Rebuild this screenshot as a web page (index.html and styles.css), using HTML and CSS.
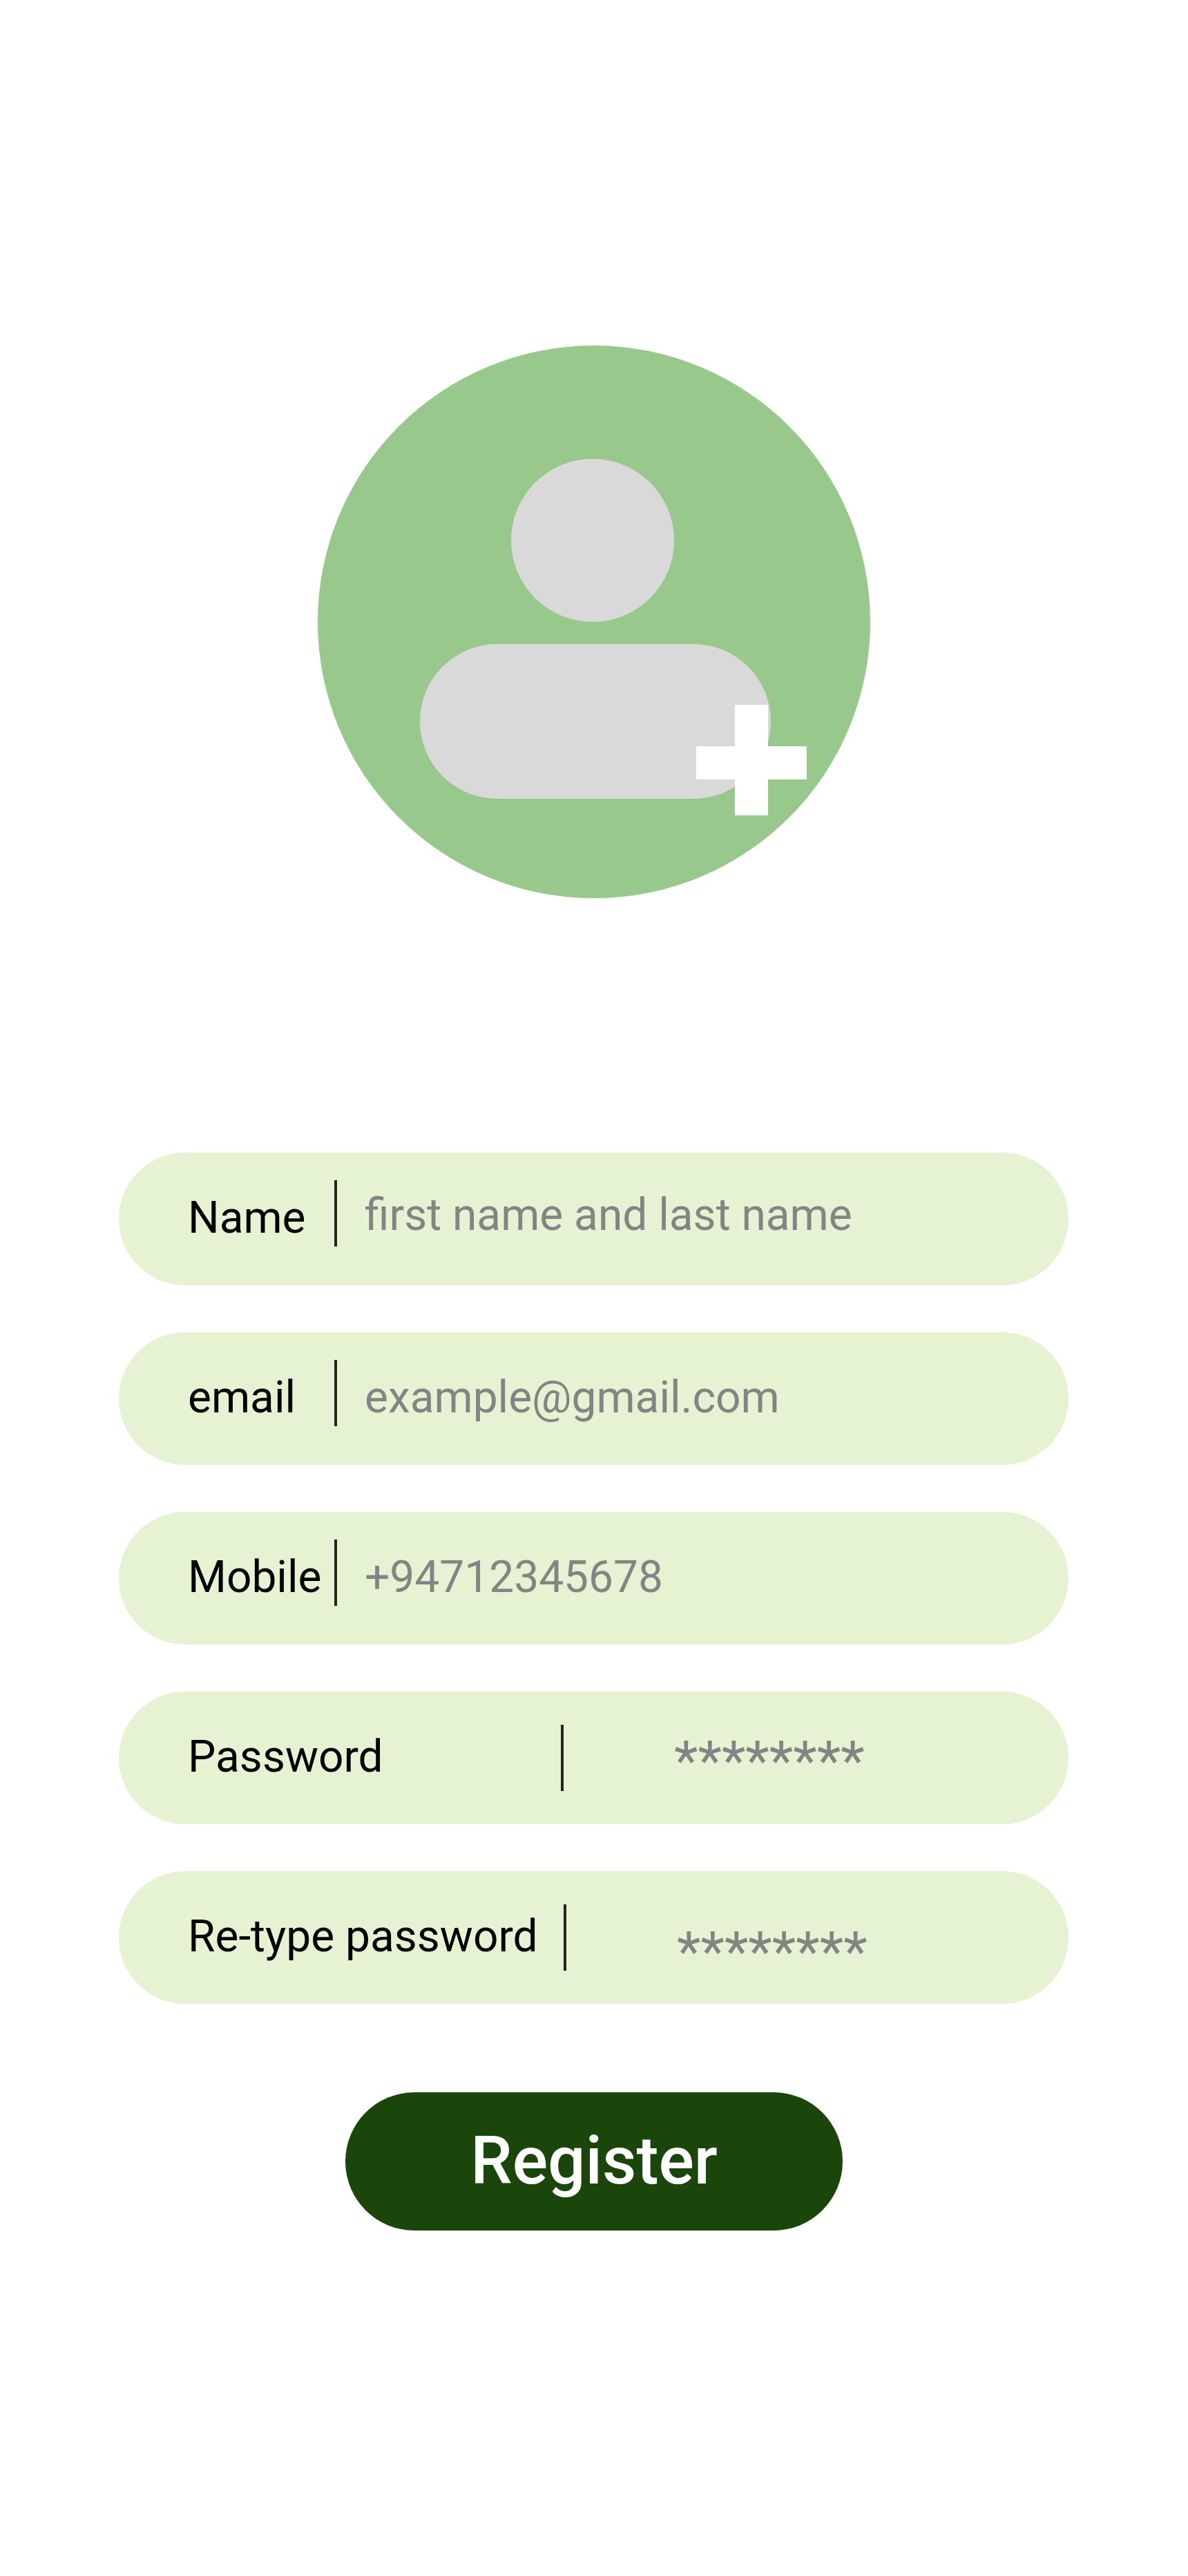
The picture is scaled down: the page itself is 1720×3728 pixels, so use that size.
FILE: index.html
```
<!DOCTYPE html>
<html lang="en">
<head>
<meta charset="utf-8">
<title>Register</title>
<link rel="stylesheet" href="styles.css">
</head>
<body>
<main class="screen">
  <svg class="avatar" viewBox="0 0 800 800" aria-label="Add profile photo">
    <circle cx="400" cy="400" r="400" fill="#98c88c"/>
    <circle cx="398" cy="282" r="118" fill="#d9d9d9"/>
    <rect x="148" y="432" width="508" height="224" rx="112" fill="#d9d9d9"/>
    <path d="M604 520h48v60h56v48h-56v52h-48v-52h-56v-48h56z" fill="#fff"/>
  </svg>
  <form class="form">
    <label class="field"><span class="name">Name</span><span class="bar"></span><span class="hint hint-name">first name and last name</span></label>
    <label class="field"><span class="name">email</span><span class="bar"></span><span class="hint">example@gmail.com</span></label>
    <label class="field"><span class="name">Mobile</span><span class="bar"></span><span class="hint">+94712345678</span></label>
    <label class="field secret"><span class="name">Password</span><span class="bar"></span><span class="hint stars">********</span></label>
    <label class="field secret retype"><span class="name">Re-type password</span><span class="bar"></span><span class="hint stars">********</span></label>
    <button class="submit" type="button">Register</button>
  </form>
</main>
</body>
</html>
```
FILE: styles.css
```
body { margin: 0; background: #fff; font-family: Roboto, sans-serif; }
.screen { height: 3728px; padding-top: 500px; box-sizing: border-box; display: flex; flex-direction: column; align-items: center; }
.avatar { width: 800px; height: 800px; flex: none; }
.form { width: 1376px; margin-top: 368px; display: flex; flex-direction: column; gap: 68px; }
.field { width: 1374.5px; height: 192px; border-radius: 96px; background: #e6f3d3; display: flex; align-items: flex-start; padding-left: 100px; box-sizing: border-box; font-size: 64px; line-height: 75px; white-space: nowrap; }
.name { width: 212px; margin-top: 57px; }
.bar { width: 4px; height: 96px; margin-top: 40px; background: #222422; }
.hint { margin: 57px 0 0 40px; color: #848484; }
.hint-name { margin-top: 53px; }
.secret .name { width: 540px; }
.secret .bar { margin-top: 48px; }
.retype .name { width: 544px; }
.stars { margin: 54px 0 0 160px; font-size: 80px; line-height: 94px; }
.retype .stars { margin-top: 70px; }
.submit { width: 720px; height: 200px; margin: 60px auto 0; padding: 0 0 2px; border: 0; border-radius: 100px; background: #1b460b; color: #fff; font: 500 96px/112px Roboto, sans-serif; }
```
